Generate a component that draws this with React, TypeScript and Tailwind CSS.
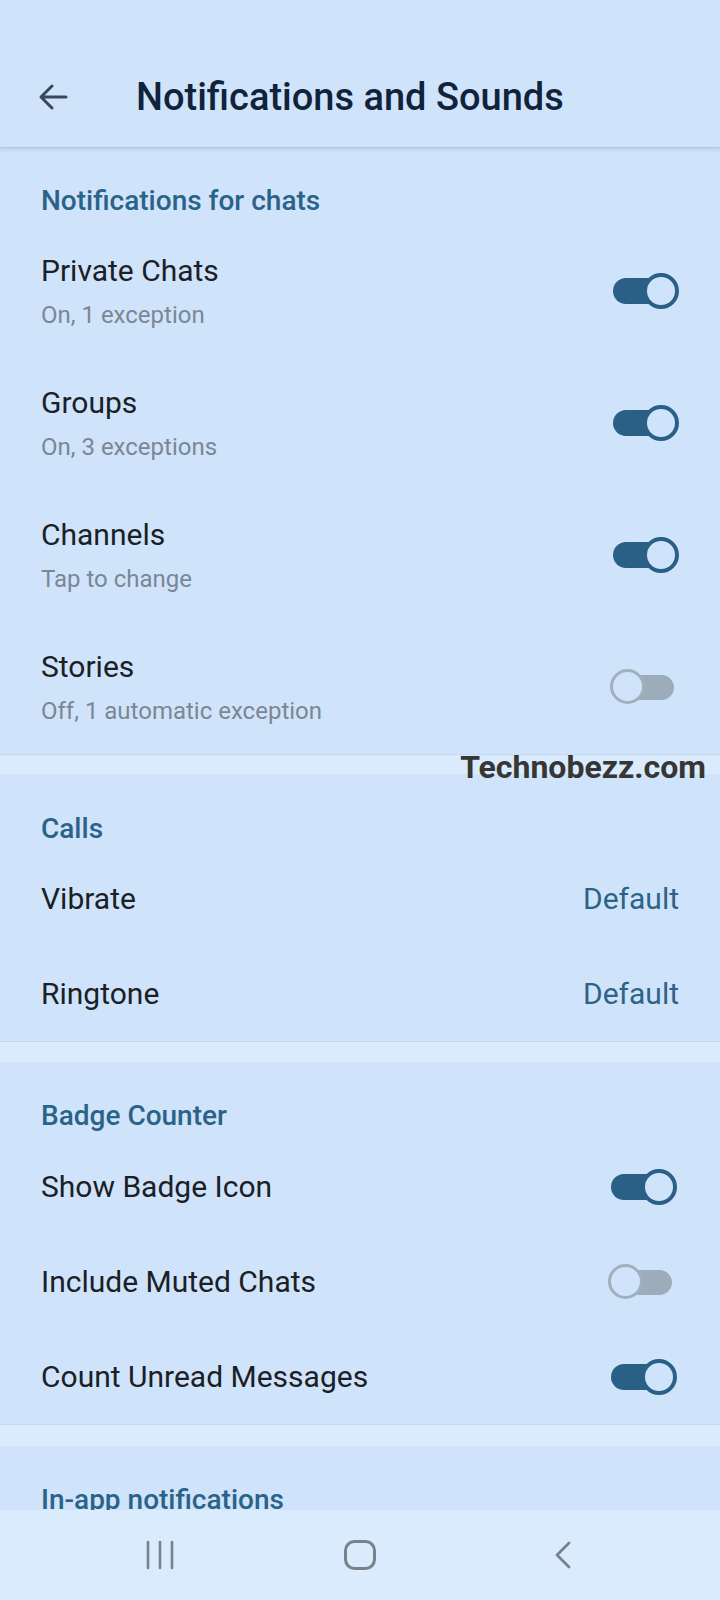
import React from 'react'

type ToggleProps = { on: boolean }

const Toggle = ({ on }: ToggleProps) => {
  if (on) {
    return (
      <div className="relative w-[66px] h-[36px] shrink-0">
        <div className="absolute left-0 top-[5px] w-[56px] h-[26px] rounded-full bg-[#2a5f86]" />
        <div className="absolute right-0 top-0 w-[36px] h-[36px] rounded-full border-[4px] border-[#2a5f86] bg-[#cfe4fa]" />
      </div>
    )
  }
  return (
    <div className="relative w-[64px] h-[36px] shrink-0 mr-[5px]">
      <div className="absolute right-0 top-[6px] w-[54px] h-[25px] rounded-full bg-[#9dacbb]" />
      <div className="absolute left-0 top-0 w-[35px] h-[35px] rounded-full border-[3.5px] border-[#a2b0be] bg-[#cfe4fa]" />
    </div>
  )
}

const SectionTitle = ({ children }: { children: React.ReactNode }) => (
  <div className="px-[41px] h-[32px] leading-[32px] text-[28px] font-medium text-[#2b6287]">{children}</div>
)

const ToggleRow = ({ title, sub, on }: { title: string; sub: string; on: boolean }) => (
  <div className="h-[132px] flex items-center justify-between pl-[41px] pr-[41px]">
    <div className="flex flex-col gap-[11px]">
      <div className="text-[30px] leading-[36px] text-[#1b2026]">{title}</div>
      <div className="text-[24px] leading-[30px] text-[#7b8794]">{sub}</div>
    </div>
    <Toggle on={on} />
  </div>
)

const SimpleRow = ({ title, on }: { title: string; on: boolean }) => (
  <div className="h-[95px] flex items-center justify-between pl-[41px] pr-[43px]">
    <div className="text-[30px] leading-[36px] text-[#1b2026]">{title}</div>
    <Toggle on={on} />
  </div>
)

const ValueRow = ({ title, value, h }: { title: string; value: string; h: string }) => (
  <div className={`${h} flex items-center justify-between px-[41px]`}>
    <div className="text-[30px] leading-[36px] text-[#1b2026]">{title}</div>
    <div className="text-[30px] leading-[36px] text-[#2e6388]">{value}</div>
  </div>
)

const Divider = ({ h }: { h: string }) => <div className={`${h} bg-[#d9ebfc] border-t border-[#c4d9ee]`} />

export default function App() {
  return (
    <div
      className="relative w-[720px] h-[1600px] overflow-hidden flex flex-col bg-[#cfe4fa]"
      style={{ fontFamily: 'Roboto, "Noto Sans", sans-serif' }}
    >
      {/* status bar */}
      <div className="h-[46px] shrink-0" />

      {/* header */}
      <div className="h-[102px] shrink-0 flex items-center border-b border-[#b3c8dc] shadow-[0_2px_3px_rgba(90,120,150,0.18)] relative z-10">
        <div className="w-[136px] pl-[38px] flex items-center">
          <svg width="30" height="28" viewBox="0 0 30 28" fill="none">
            <path d="M28 14H3M14 3L3 14L14 25" stroke="#3b4858" strokeWidth="3" strokeLinecap="round" strokeLinejoin="round" />
          </svg>
        </div>
        <div className="text-[38px] font-medium text-[#10233a] leading-[46px]">Notifications and Sounds</div>
      </div>

      <div className="flex-1 overflow-hidden relative">
        {/* Notifications for chats */}
        <div className="pt-[37px] pb-[1px]">
          <SectionTitle>Notifications for chats</SectionTitle>
          <div className="mt-[8px]">
            <ToggleRow title="Private Chats" sub="On, 1 exception" on />
            <ToggleRow title="Groups" sub="On, 3 exceptions" on />
            <ToggleRow title="Channels" sub="Tap to change" on />
            <ToggleRow title="Stories" sub="Off, 1 automatic exception" on={false} />
          </div>
        </div>

        <Divider h="h-[20px]" />

        {/* Calls */}
        <div className="pt-[39px]">
          <SectionTitle>Calls</SectionTitle>
          <div className="mt-[7px]">
            <ValueRow title="Vibrate" value="Default" h="h-[94px]" />
            <ValueRow title="Ringtone" value="Default" h="h-[95px]" />
          </div>
        </div>

        <Divider h="h-[21px]" />

        {/* Badge Counter */}
        <div className="pt-[38px]">
          <SectionTitle>Badge Counter</SectionTitle>
          <div className="mt-[7px]">
            <SimpleRow title="Show Badge Icon" on />
            <SimpleRow title="Include Muted Chats" on={false} />
            <SimpleRow title="Count Unread Messages" on />
          </div>
        </div>

        <Divider h="h-[22px]" />

        {/* In-app notifications */}
        <div className="pt-[38px]">
          <SectionTitle>In-app notifications</SectionTitle>
        </div>

        {/* watermark */}
        <div className="absolute right-[14px] top-[599px] text-[32px] leading-[40px] font-bold text-[#363636]">
          Technobezz.com
        </div>
      </div>

      {/* navigation bar */}
      <div className="h-[90px] shrink-0 bg-[#d9ebfc] flex items-center">
        <div className="w-[160px] ml-[80px] flex justify-center">
          <svg width="30" height="30" viewBox="0 0 30 30" fill="none">
            <path d="M3 2V28M15 2V28M27 2V28" stroke="#7a8188" strokeWidth="2.6" strokeLinecap="round" />
          </svg>
        </div>
        <div className="w-[240px] flex justify-center">
          <svg width="32" height="30" viewBox="0 0 32 30" fill="none">
            <rect x="1.5" y="1.5" width="29" height="27" rx="9" stroke="#7a8188" strokeWidth="3" />
          </svg>
        </div>
        <div className="w-[160px] flex justify-center pl-[6px]">
          <svg width="18" height="28" viewBox="0 0 18 28" fill="none">
            <path d="M15 2L3 14L15 26" stroke="#7a8188" strokeWidth="2.8" strokeLinecap="round" strokeLinejoin="round" />
          </svg>
        </div>
      </div>
    </div>
  )
}
